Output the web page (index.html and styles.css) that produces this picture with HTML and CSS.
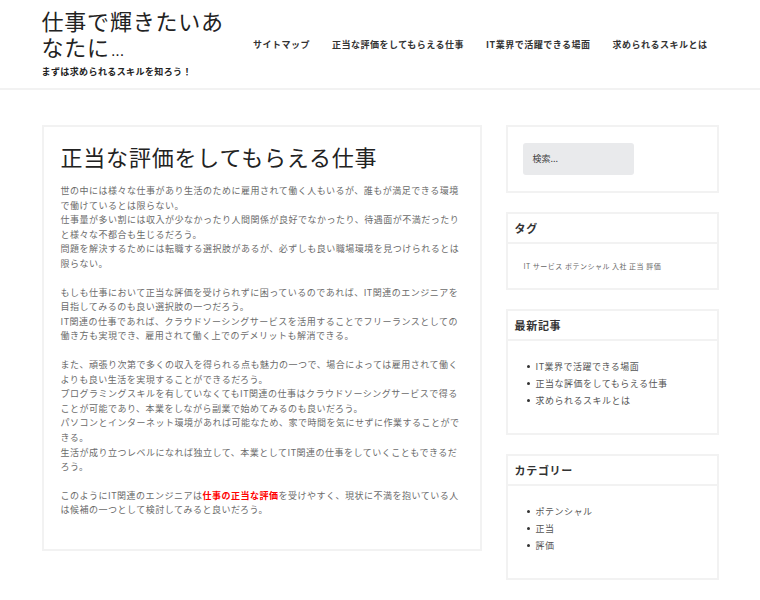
FILE: index.html
```html
<!DOCTYPE html>
<html lang="ja">

<head>
    <meta charset="UTF-8" />
    <meta name="viewport" content="width=device-width,initial-scale=1.0" />
    <title>仕事で輝きたいあなたに…</title>
    <link rel="stylesheet" href="styles.css">
</head>

<body>
    <header class="site-header">
        <div class="container header-inner">
            <div class="branding">
                <div class="site-title">仕事で輝きたいあなたに<span class="dots">...</span></div>
                <div class="site-desc">まずは求められるスキルを知ろう！</div>
            </div>
            <nav class="nav">
                <a class="nav-item" href="#">サイトマップ</a>
                <a class="nav-item" href="#">正当な評価をしてもらえる仕事</a>
                <a class="nav-item" href="#">IT業界で活躍できる場面</a>
                <a class="nav-item" href="#">求められるスキルとは</a>
            </nav>
        </div>
    </header>

    <div class="container content">
        <article class="post">
            <h1 class="post-title">正当な評価をしてもらえる仕事</h1>
            <p>世の中には様々な仕事があり生活のために雇用されて働く人もいるが、誰もが満足できる環境で働けているとは限らない。<br>仕事量が多い割には収入が少なかったり人間関係が良好でなかったり、待遇面が不満だったりと様々な不都合も生じるだろう。<br>問題を解決するためには転職する選択肢があるが、必ずしも良い職場環境を見つけられるとは限らない。</p>
            <p>もしも仕事において正当な評価を受けられずに困っているのであれば、IT関連のエンジニアを目指してみるのも良い選択肢の一つだろう。<br>IT関連の仕事であれば、クラウドソーシングサービスを活用することでフリーランスとしての働き方も実現でき、雇用されて働く上でのデメリットも解消できる。</p>
            <p>また、頑張り次第で多くの収入を得られる点も魅力の一つで、場合によっては雇用されて働くよりも良い生活を実現することができるだろう。<br>プログラミングスキルを有していなくてもIT関連の仕事はクラウドソーシングサービスで得ることが可能であり、本業をしながら副業で始めてみるのも良いだろう。<br>パソコンとインターネット環境があれば可能なため、家で時間を気にせずに作業することができる。<br>生活が成り立つレベルになれば独立して、本業としてIT関連の仕事をしていくこともできるだろう。</p>
            <p>このようにIT関連のエンジニアは<a class="hl" href="#">仕事の正当な評価</a>を受けやすく、現状に不満を抱いている人は候補の一つとして検討してみると良いだろう。</p>
        </article>

        <aside class="sidebar">
            <div class="widget search-widget">
                <div class="search-box">検索...</div>
            </div>

            <div class="widget">
                <div class="widget-title">タグ</div>
                <div class="widget-body tags">
                    <a href="#">IT</a>
                    <a href="#">サービス</a>
                    <a href="#">ポテンシャル</a>
                    <a href="#">入社</a>
                    <a href="#">正当</a>
                    <a href="#">評価</a>
                </div>
            </div>

            <div class="widget">
                <div class="widget-title">最新記事</div>
                <div class="widget-body">
                    <ul class="list">
                        <li>IT業界で活躍できる場面</li>
                        <li>正当な評価をしてもらえる仕事</li>
                        <li>求められるスキルとは</li>
                    </ul>
                </div>
            </div>

            <div class="widget">
                <div class="widget-title">カテゴリー</div>
                <div class="widget-body">
                    <ul class="list">
                        <li>ポテンシャル</li>
                        <li>正当</li>
                        <li>評価</li>
                    </ul>
                </div>
            </div>
        </aside>
    </div>
</body>

</html>
```

FILE: styles.css
```css
body {
    margin: 0;
    font-family: "Noto Sans CJK JP", "Noto Sans", sans-serif;
    background: #fff;
    color: #222;
}

a {
    text-decoration: none;
    color: inherit;
}

.container {
    width: 677px;
    margin: 0 auto;
}

.site-header {
    border-bottom: 2px solid #f2f2f2;
}

.header-inner {
    display: flex;
    align-items: center;
    justify-content: space-between;
    padding: 7px 0 9px;
}

.branding {
    width: 196px;
}

.site-title {
    font-size: 22px;
    line-height: 26px;
    letter-spacing: 0.8px;
    color: #222;
}

.site-title .dots {
    font-family: "Liberation Sans", sans-serif;
    font-size: 16px;
    line-height: 1;
    letter-spacing: 0;
    margin-left: 1px;
}

.site-desc {
    margin-top: 6px;
    font-size: 9px;
    line-height: 14px;
    font-weight: bold;
    letter-spacing: 0.4px;
    color: #222;
}

.nav {
    display: flex;
    padding-top: 2px;
}

.nav-item {
    padding: 0 11px;
    font-size: 9px;
    font-weight: bold;
    letter-spacing: 0.5px;
    color: #333;
}

.content {
    display: flex;
    align-items: flex-start;
    gap: 24px;
    margin-top: 35px;
}

.post {
    width: 440px;
    box-sizing: border-box;
    border: 2px solid #f2f2f2;
    padding: 16px 17px 17px;
}

.post-title {
    margin: 0 0 15px;
    font-size: 22px;
    line-height: 26px;
    font-weight: normal;
    letter-spacing: 0.8px;
    color: #222;
}

.post p {
    margin: 0 0 14px;
    font-size: 9px;
    line-height: 14.6px;
    letter-spacing: 0.5px;
    color: #6b6b6b;
}

.post .hl {
    color: #f00;
    font-weight: bold;
}

.sidebar {
    width: 213px;
}

.widget {
    border: 2px solid #f2f2f2;
    margin-bottom: 19px;
}

.search-widget {
    padding: 16px 15px 16px;
}

.search-box {
    width: 111px;
    height: 32px;
    box-sizing: border-box;
    padding: 0 10px;
    background: #e9eaec;
    border-radius: 3px;
    font-size: 9px;
    line-height: 32px;
    color: #444;
}

.widget-title {
    height: 28px;
    line-height: 28px;
    padding: 0 7px;
    border-bottom: 2px solid #f2f2f2;
    font-size: 11px;
    font-weight: bold;
    letter-spacing: 0.7px;
    color: #333;
}

.widget-body {
    padding: 17px 16px 16px;
}

.tags {
    padding: 14px 16px 13px;
    font-size: 7px;
    line-height: 17px;
    letter-spacing: 0.5px;
    color: #666;
}

.list {
    list-style: none;
    margin: 0 0 8px;
    padding: 0 0 0 3px;
}

.list li {
    display: flex;
    align-items: center;
    gap: 6px;
    font-size: 9px;
    line-height: 17px;
    letter-spacing: 0.5px;
    color: #555;
}

.list li::before {
    content: "";
    width: 3px;
    height: 3px;
    border-radius: 50%;
    background: #333;
}
```
